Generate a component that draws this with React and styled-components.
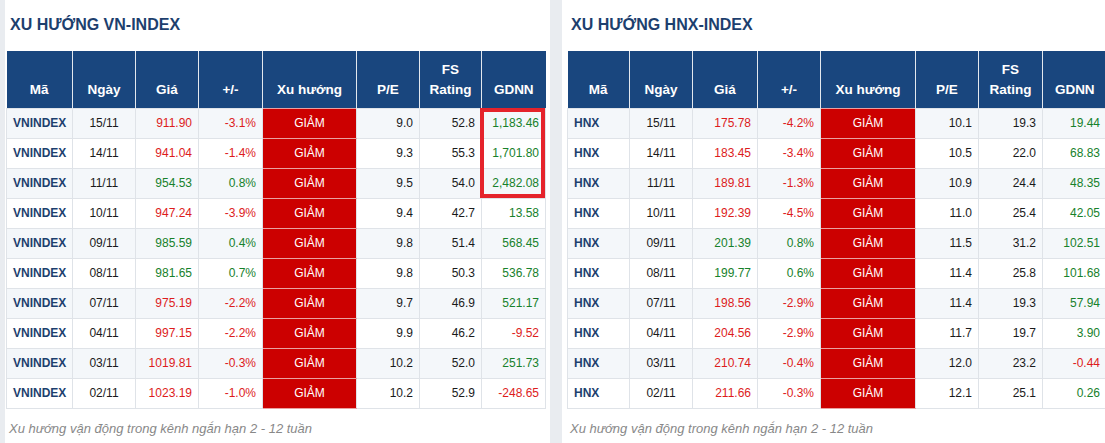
import React from "react";
import styled, { createGlobalStyle } from "styled-components";

const Global = createGlobalStyle`
  html, body { margin: 0; padding: 0; background: #e9ecf0; }
  body { font-family: "Liberation Sans", Arial, sans-serif; overflow: hidden; }
`;

const Page = styled.div`
  display: flex;
  gap: 12px;
  padding-left: 5px;
  width: 1120px;
  height: 443px;
  box-sizing: border-box;
`;

const Panel = styled.section`
  flex: 0 0 auto;
  width: ${(p) => p.$width}px;
  background: #ffffff;
  padding: 15px 5px 0 ${(p) => p.$padLeft}px;
  box-sizing: border-box;
`;

const Title = styled.h2`
  margin: 0 0 16px 4px;
  font-size: 16px;
  line-height: 20px;
  font-weight: 700;
  color: #1d3f6e;
`;

const TableWrap = styled.div`
  position: relative;
`;

const Table = styled.table`
  border-collapse: collapse;
  table-layout: fixed;
  width: 539px;
  font-size: 12px;
`;

const HeadCell = styled.th`
  background: #19467e;
  color: #ffffff;
  font-size: 13.5px;
  font-weight: 700;
  line-height: 20px;
  height: 57px;
  box-sizing: border-box;
  padding: 0 2px 8px;
  vertical-align: bottom;
  text-align: center;
  border-left: 1px solid #e3e8ee;
  &:first-child { border-left: none; }
`;

const Row = styled.tr`
  background: ${(p) => (p.$odd ? "#f4f7fa" : "#ffffff")};
`;

const Cell = styled.td`
  height: 30px;
  box-sizing: border-box;
  padding: 0 6px;
  border: 1px solid #dfe3e8;
  color: ${(p) => p.$color || "#1a1a1a"};
  text-align: ${(p) => p.$align || "right"};
  white-space: nowrap;
  line-height: 14px;
`;

const CodeCell = styled(Cell)`
  font-weight: 700;
  color: #1d3f6e;
  text-align: left;
`;

const TrendCell = styled(Cell)`
  background: #cc0000;
  color: #ffffff;
  text-align: center;
  border-color: #e9a0a0 #dfe3e8;
`;

const Highlight = styled.div`
  position: absolute;
  left: 474px;
  top: 57px;
  width: 65px;
  height: 90px;
  border: 4px solid #e5232b;
  box-sizing: border-box;
  pointer-events: none;
`;

const Note = styled.p`
  margin: 10px 0 0 3px;
  font-size: 13px;
  line-height: 20px;
  font-style: italic;
  color: #888888;
`;

const RED = "#dd1c1c";
const GREEN = "#17812b";

const vnRows = [
  ["15/11", "911.90", "-3.1%", "9.0", "52.8", "1,183.46"],
  ["14/11", "941.04", "-1.4%", "9.3", "55.3", "1,701.80"],
  ["11/11", "954.53", "0.8%", "9.5", "54.0", "2,482.08"],
  ["10/11", "947.24", "-3.9%", "9.4", "42.7", "13.58"],
  ["09/11", "985.59", "0.4%", "9.8", "51.4", "568.45"],
  ["08/11", "981.65", "0.7%", "9.8", "50.3", "536.78"],
  ["07/11", "975.19", "-2.2%", "9.7", "46.9", "521.17"],
  ["04/11", "997.15", "-2.2%", "9.9", "46.2", "-9.52"],
  ["03/11", "1019.81", "-0.3%", "10.2", "52.0", "251.73"],
  ["02/11", "1023.19", "-1.0%", "10.2", "52.9", "-248.65"],
];

const hnxRows = [
  ["15/11", "175.78", "-4.2%", "10.1", "19.3", "19.44"],
  ["14/11", "183.45", "-3.4%", "10.5", "22.0", "68.83"],
  ["11/11", "189.81", "-1.3%", "10.9", "24.4", "48.35"],
  ["10/11", "192.39", "-4.5%", "11.0", "25.4", "42.05"],
  ["09/11", "201.39", "0.8%", "11.5", "31.2", "102.51"],
  ["08/11", "199.77", "0.6%", "11.4", "25.8", "101.68"],
  ["07/11", "198.56", "-2.9%", "11.4", "19.3", "57.94"],
  ["04/11", "204.56", "-2.9%", "11.7", "19.7", "3.90"],
  ["03/11", "210.74", "-0.4%", "12.0", "23.2", "-0.44"],
  ["02/11", "211.66", "-0.3%", "12.1", "25.1", "0.26"],
];

const heads = ["Mã", "Ngày", "Giá", "+/-", "Xu hướng", "P/E", "FS Rating", "GDNN"];

function TrendTable({ code, rows, widths, highlight }) {
  return (
    <TableWrap>
      <Table>
        <colgroup>
          {widths.map((w, i) => (
            <col key={i} style={{ width: w }} />
          ))}
        </colgroup>
        <thead>
          <tr>
            {heads.map((h) =>
              h === "FS Rating" ? (
                <HeadCell key={h}>
                  FS
                  <br />
                  Rating
                </HeadCell>
              ) : (
                <HeadCell key={h}>{h}</HeadCell>
              )
            )}
          </tr>
        </thead>
        <tbody>
          {rows.map(([d, p, c, pe, fs, gd], i) => {
            const neg = c.startsWith("-");
            return (
              <Row key={d} $odd={i % 2 === 0}>
                <CodeCell>{code}</CodeCell>
                <Cell $align="center">{d}</Cell>
                <Cell $color={neg ? RED : GREEN}>{p}</Cell>
                <Cell $color={neg ? RED : GREEN}>{c}</Cell>
                <TrendCell>GIẢM</TrendCell>
                <Cell>{pe}</Cell>
                <Cell>{fs}</Cell>
                <Cell $color={gd.startsWith("-") ? RED : GREEN}>{gd}</Cell>
              </Row>
            );
          })}
        </tbody>
      </Table>
      {highlight && <Highlight />}
    </TableWrap>
  );
}

export default function App() {
  return (
    <>
      <Global />
      <Page>
        <Panel $width={545} $padLeft={1}>
          <Title>XU HƯỚNG VN-INDEX</Title>
          <TrendTable
            code="VNINDEX"
            rows={vnRows}
            widths={[66, 63, 63, 64, 94, 63, 62, 64]}
            highlight
          />
          <Note>Xu hướng vận động trong kênh ngắn hạn 2 - 12 tuần</Note>
        </Panel>
        <Panel $width={560} $padLeft={5}>
          <Title>XU HƯỚNG HNX-INDEX</Title>
          <TrendTable
            code="HNX"
            rows={hnxRows}
            widths={[62, 63, 65, 63, 95, 63, 64, 64]}
          />
          <Note>Xu hướng vận động trong kênh ngắn hạn 2 - 12 tuần</Note>
        </Panel>
      </Page>
    </>
  );
}
